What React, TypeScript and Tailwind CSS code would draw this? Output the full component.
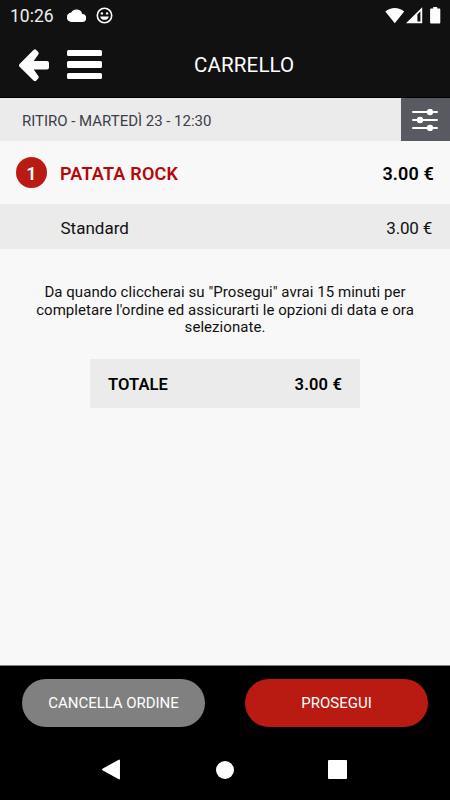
import { useState } from "react";

const items = [
  { qty: 1, name: "PATATA ROCK", price: 3, variant: "Standard" },
];

const euro = (value: number) => `${value.toFixed(2)} €`;

function StatusBar() {
  return (
    <div className="h-8 flex items-center justify-between pl-[10px] pr-[9px]">
      <div className="flex items-center">
        <span className="w-[45px] text-[17.500px] leading-8 whitespace-nowrap text-[#eee]">10:26</span>
        <svg width="19" height="13" viewBox="0 0 19 13" className="ml-3 -mt-[2px]" fill="#fff">
          <path d="M15.300 4.900A6 6 0 0 0 4.200 3.600 4.700 4.700 0 0 0 4.700 13h10.400a4 4 0 0 0 .2-8.100z" />
        </svg>
        <svg width="17" height="17" viewBox="0 0 17 17" className="ml-[10px] -mt-[2px]" fill="none">
          <circle cx="8.500" cy="8.500" r="7.200" stroke="#fff" strokeWidth="1.600" />
          <circle cx="5.900" cy="6.400" r="1.200" fill="#fff" />
          <circle cx="11.100" cy="6.400" r="1.200" fill="#fff" />
          <path d="M4.200 9.400h8.600a4.400 4.400 0 0 1-8.600 0z" fill="#fff" />
        </svg>
      </div>
      <div className="flex items-center -mt-[2px]">
        <svg width="20" height="17" viewBox="0 0 20 17" fill="#fff">
          <path d="M.3 4.600C5.500-.3 14-.3 19.200 4.600L9.750 16.300z" />
        </svg>
        <svg width="17" height="17" viewBox="0 0 17 17" className="ml-px" fill="#fff">
          <path fillRule="evenodd" d="M16.200.300V16.300H0zM14.400 4.200l-3 3.200v7h3z" />
        </svg>
        <svg width="11" height="17" viewBox="0 0 11 17" className="ml-[7px]" fill="#fff">
          <path d="M3.200 0h4v1.500h2.200q.9 0 .9.900v13.200q0 .9-.9.900H1q-.9 0-.9-.9V2.400q0-.9.900-.9h2.200z" />
        </svg>
      </div>
    </div>
  );
}

function Header() {
  return (
    <header className="bg-[#111] text-white h-[98px] shrink-0 border-b border-black">
      <StatusBar />
      <div className="flex items-center h-[65px] pl-[19px]">
        <button aria-label="Indietro">
          <svg width="30" height="34" viewBox="0 0 30 34" className="block" fill="#fff" stroke="#fff" strokeWidth="4" strokeLinejoin="round">
            <path d="M2 17.300L15.900 3.400l1.800 2L10.800 15H28v4.400H10.800l6.900 9.700-1.800 2z" />
          </svg>
        </button>
        <button aria-label="Menu" className="ml-[18px] flex flex-col gap-[5.500px] w-[35px]">
          <span className="h-[6.200px] rounded-[1.500px] bg-white" />
          <span className="h-[6.200px] rounded-[1.500px] bg-white" />
          <span className="h-[6.200px] rounded-[1.500px] bg-white" />
        </button>
        <h1 className="ml-[92px] text-[20.500px] leading-6 tracking-[0.150px]">CARRELLO</h1>
      </div>
    </header>
  );
}

export default function App() {
  const [cart, setCart] = useState(items);
  const total = cart.reduce((sum, i) => sum + i.qty * i.price, 0);

  return (
    <div className="w-[450px] h-[800px] flex flex-col overflow-hidden bg-[#f8f8f8] text-[#111] font-['Roboto',sans-serif]">
      <Header />

      <div className="h-[43px] shrink-0 flex bg-[#ebebeb]">
        <div className="flex-1 flex items-center pl-[22px] pt-[3px] text-[15px] tracking-[-0.020px] text-[#3d3d48]">RITIRO - MARTEDÌ 23 - 12:30</div>
        <button aria-label="Opzioni" className="w-[49px] pr-[2px] bg-[#595961] flex items-center justify-center">
          <svg width="26" height="22" viewBox="0 0 26 22" fill="#fff" stroke="#fff" strokeWidth="2" strokeLinecap="round">
            <path d="M1 3h24M1 11h24M1 19h24" />
            <circle cx="18" cy="3" r="2.200" />
            <circle cx="8" cy="11" r="2.200" />
            <circle cx="18" cy="19" r="2.200" />
          </svg>
        </button>
      </div>

      <main className="flex-1">
        {cart.map(item => (
          <section key={item.name}>
            <div className="h-[63px] flex items-center pl-4 pr-4 text-[18px] font-semibold">
              <span className="size-[31px] rounded-full bg-[#b91b12] text-white flex items-center justify-center pt-[2px]">{item.qty}</span>
              <span className="ml-[13px] pt-[2px] flex-1 tracking-[0.200px] text-[#b50808]">{item.name}</span>
              <span className="pt-[2px] tracking-[0.150px] text-black">{euro(item.price)}</span>
            </div>
            <div className="h-[45px] flex items-center justify-between pl-[60.500px] pr-[18px] pt-[4px] bg-[#ebebeb] text-[17px]">
              <span>{item.variant}</span>
              <span className="tracking-[-0.200px]">{euro(item.price)}</span>
            </div>
          </section>
        ))}

        <p className="mt-[35px] px-[30px] text-center text-[15px] leading-[17.500px] tracking-[0.050px]">
          Da quando cliccherai su "Prosegui" avrai 15 minuti per<br />completare l'ordine ed assicurarti le opzioni di data e ora<br />selezionate.
        </p>

        <div className="mt-[22px] mx-[90px] h-[49px] px-[18px] pt-[4px] flex items-center justify-between bg-[#ebebeb] text-[16.500px] font-semibold text-black">
          <span className="tracking-[0.100px]">TOTALE</span>
          <span className="tracking-[0.150px]">{euro(total)}</span>
        </div>
      </main>

      <footer className="h-[135px] shrink-0 bg-black text-white border-t border-[#7d8381]">
        <div className="flex justify-between pt-[12.500px] pl-[22px] pr-[22px] text-[15px]">
          <button onClick={() => setCart([])} className="w-[183px] h-12 rounded-full bg-[#808080] pt-px tracking-[-0.050px]">CANCELLA ORDINE</button>
          <button className="w-[183px] h-12 rounded-full bg-[#b91b12] pt-px">PROSEGUI</button>
        </div>
        <nav className="mt-[32.500px] flex items-center justify-between pl-[101px] pr-[103px]">
          <svg width="20" height="21" viewBox="0 0 20 21" fill="#fff" stroke="#fff" strokeWidth="1.500" strokeLinejoin="round">
            <path d="M18.200 1.300v18.400L1.800 10.500z" />
          </svg>
          <span className="size-[18px] rounded-full bg-white" />
          <span className="size-[19px] rounded-[1px] bg-white" />
        </nav>
      </footer>
    </div>
  );
}
